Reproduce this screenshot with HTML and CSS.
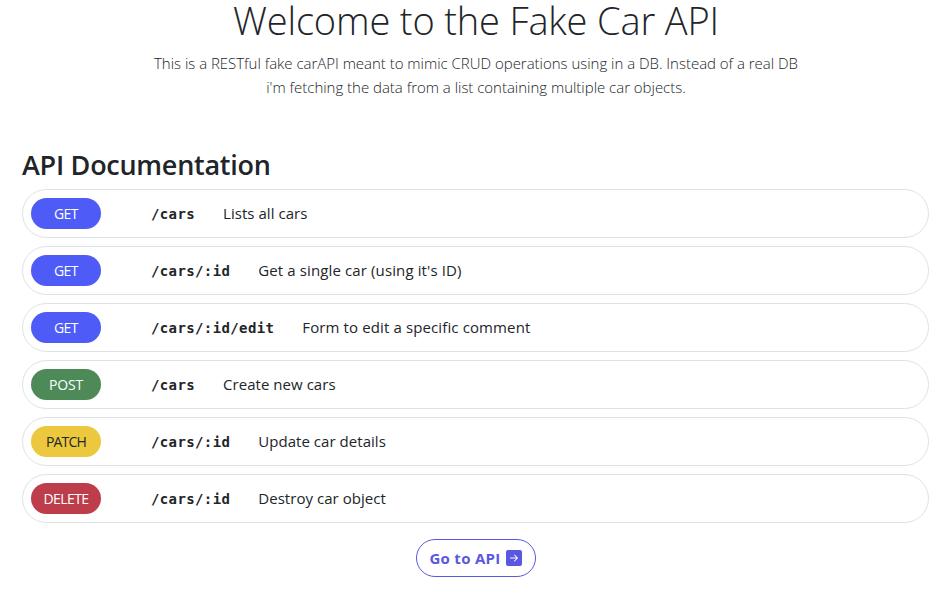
FILE: index.html
```html
<!DOCTYPE html>
<html lang="en">
<head>
<meta charset="utf-8">
<title>Fake Car API</title>
<link rel="stylesheet" href="styles.css">
</head>
<body>
<header class="intro">
  <h1 class="intro-title">Welcome to the Fake Car API</h1>
  <p class="intro-text">This is a RESTful fake carAPI meant to mimic CRUD operations using in a DB. Instead of a real DB<br>i'm fetching the data from a list containing multiple car objects.</p>
</header>
<main class="docs">
  <h2 class="docs-title">API Documentation</h2>
  <ul class="routes">
    <li class="route"><span class="badge get">GET</span><code>/cars</code><span class="desc">Lists all cars</span></li>
    <li class="route"><span class="badge get">GET</span><code>/cars/:id</code><span class="desc loose">Get a single car (using it's ID)</span></li>
    <li class="route"><span class="badge get">GET</span><code>/cars/:id/edit</code><span class="desc loose">Form to edit a specific comment</span></li>
    <li class="route"><span class="badge post">POST</span><code>/cars</code><span class="desc">Create new cars</span></li>
    <li class="route"><span class="badge patch">PATCH</span><code>/cars/:id</code><span class="desc">Update car details</span></li>
    <li class="route"><span class="badge delete">DELETE</span><code>/cars/:id</code><span class="desc">Destroy car object</span></li>
  </ul>
  <a class="go" href="#"><span>Go to API</span>
    <svg class="go-icon" viewBox="0 0 16 16" width="16" height="16"><path fill="currentColor" d="M0 14a2 2 0 0 0 2 2h12a2 2 0 0 0 2-2V2a2 2 0 0 0-2-2H2a2 2 0 0 0-2 2v12zm4.500-6.500h5.793L8.146 5.354a.5.5 0 1 1 .708-.708l3 3a.5.5 0 0 1 0 .708l-3 3a.5.5 0 0 1-.708-.708L10.293 8.500H4.500a.5.5 0 0 1 0-1z"/></svg>
  </a>
</main>
</body>
</html>
```
FILE: styles.css
```css
* { box-sizing: border-box; }
body {
  margin: 0;
  background: #fff;
  color: #212529;
  font-family: "Open Sans", "Noto Sans", sans-serif;
  font-size: 15px;
  line-height: 24px;
}
.intro { text-align: center; }
.intro-title {
  margin: 0;
  font-size: 38px;
  font-weight: 300;
  line-height: 40px;
  letter-spacing: -0.16px;
}
.intro-text {
  margin: 11px 0 0;
  font-weight: 300;
  letter-spacing: -0.02px;
}
.docs { padding: 48px 23px 0 22px; text-align: center; }
.docs-title {
  margin: 0 0 7px;
  text-align: left;
  font-size: 27px;
  font-weight: 600;
  line-height: 35px;
  letter-spacing: -0.27px;
}
.routes { display: flex; flex-direction: column; gap: 8px; margin: 0; padding: 0; list-style: none; }
.route {
  display: flex;
  align-items: center;
  height: 49px;
  padding: 0 8px;
  border: 1px solid #dee2e6;
  border-radius: 25px;
}
.badge {
  width: 70px;
  height: 31px;
  margin-right: 50px;
  border-radius: 16px;
  color: #fff;
  font-size: 14px;
  line-height: 31px;
  letter-spacing: -0.5px;
}
.get { background: #4e5bf7; }
.post { background: #4d8a57; letter-spacing: -0.2px; }
.patch { background: #ebc83d; color: #212529; letter-spacing: -0.8px; }
.delete { background: #be3d4b; letter-spacing: -0.6px; }
code {
  margin-right: 28px;
  padding-top: 1px;
  font: bold 14px/24px "DejaVu Sans Mono", monospace;
  letter-spacing: 0.38px;
}
.desc { padding-bottom: 2px; letter-spacing: 0.04px; }
.loose { letter-spacing: 0.12px; }
.go {
  display: inline-flex;
  align-items: center;
  justify-content: center;
  gap: 5px;
  width: 120px;
  height: 38px;
  margin-top: 16px;
  border: 1px solid #5a57e0;
  border-radius: 19px;
  color: #5a57e0;
  font-weight: 700;
  letter-spacing: 0.3px;
  text-decoration: none;
}
```
